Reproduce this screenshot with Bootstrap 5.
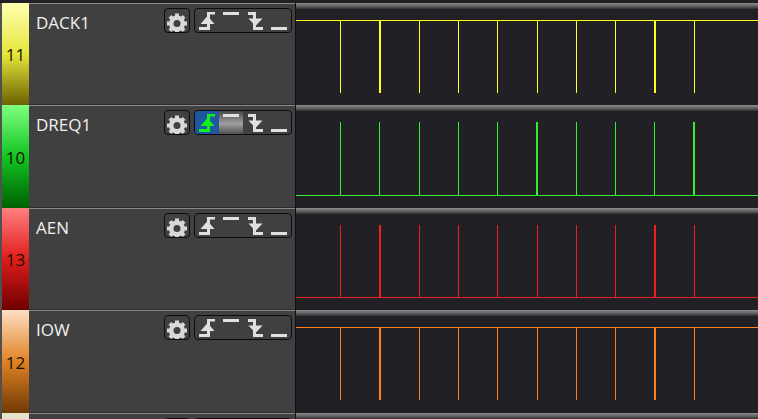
<!DOCTYPE html>
<html lang="en">
<head>
  <meta charset="UTF-8">
  <meta name="viewport" content="width=device-width, initial-scale=1">
  <title>Logic Analyzer</title>
  <link href="https://cdn.jsdelivr.net/npm/bootstrap@5.3.3/dist/css/bootstrap.min.css" rel="stylesheet">
  <style>
    html, body {
      height: 100%;
      overflow: hidden;
    }

    body {
      background: #202025;
      font-family: "Open Sans", "Liberation Sans", sans-serif;
    }

    .trace-list {
      padding-top: 3px;
      height: 419px;
      overflow: hidden;
    }

    .trace {
      height: 102px;
      flex: none;
    }

    .trace:nth-child(even) {
      height: 103px;
    }

    .strip {
      width: 2px;
      background: #505050;
    }

    .pin {
      width: 27px;
      font-size: 17px;
      color: #1a1200;
      padding-top: 2px;
    }

    .pin-yellow { background: linear-gradient(#ffffb0, #e6e63c 50%, #6b6200); }
    .pin-green  { background: linear-gradient(#80ff80, #12c422 50%, #006000); }
    .pin-red    { background: linear-gradient(#ff8080, #e01c1c 50%, #6e0000); }
    .pin-orange { background: linear-gradient(#ffdfc4, #e08224 50%, #703a06); }
    .pin-pale   { background: #e4e4c8; }

    .panel {
      width: 266px;
      background: #404040;
      border-top: 1px solid #8a8a8a;
      border-bottom: 1px solid #2c2c2c;
      padding: 4px 3px 0 7px;
      color: #f0f0f0;
      font-size: 17px;
    }

    .name {
      line-height: 22px;
      padding-top: 4px;
    }

    .divider {
      width: 1px;
      background: #101012;
    }

    .wave {
      flex: 1;
      background: linear-gradient(#8c8c8c, #5a5a5a 60%, #2e2e30) top / 100% 6px no-repeat #202025;
    }

    .wave svg {
      display: block;
      width: 462px;
      height: 102px;
    }

    .btn-tool {
      --bs-btn-padding-x: 0;
      --bs-btn-padding-y: 0;
      --bs-btn-border-radius: 0;
      --bs-btn-border-width: 0;
      width: 24px;
      height: 23px;
      flex: none;
      background: transparent;
      line-height: 0;
    }

    .tool-box {
      border: 1px solid #0c0c0c;
      border-radius: 4px;
      overflow: hidden;
      height: 25px;
    }

    .btn-tool svg {
      display: block;
      fill: #e0e0e0;
    }

    .btn-tool.is-blue {
      background: #1f57a0;
    }

    .btn-tool.is-blue svg {
      fill: #14f014;
    }

    .btn-tool.is-grey {
      background: linear-gradient(#484848, #a0a0a0 55%, #505050);
    }
  </style>
</head>
<body>

  <svg width="0" height="0" class="position-absolute">
    <symbol id="i-gear" viewBox="0 0 24 23">
      <g fill="#d8d8d8">
        <rect x="10" y="1.5" width="4" height="20" />
        <rect x="10" y="1.5" width="4" height="20" transform="rotate(45 12 11.5)" />
        <rect x="10" y="1.5" width="4" height="20" transform="rotate(90 12 11.5)" />
        <rect x="10" y="1.5" width="4" height="20" transform="rotate(135 12 11.5)" />
      </g>
      <circle cx="12" cy="11.5" r="5.75" fill="none" stroke="#d8d8d8" stroke-width="4.5" />
      <circle cx="12" cy="11.5" r="3.5" fill="#404040" />
    </symbol>
    <symbol id="i-rise" viewBox="0 0 24 23">
      <path d="M4 18h8V3h8v2.5h-5V21H4z" />
      <path d="M12.5 7L19.5 15H5.5z" />
    </symbol>
    <symbol id="i-high" viewBox="0 0 24 23">
      <path d="M4 3h16v3H4z" />
    </symbol>
    <symbol id="i-fall" viewBox="0 0 24 23">
      <path d="M5 3h8v15h7v3H10V6H5z" />
      <path d="M12.5 17L19.5 9.5H5.5z" />
    </symbol>
    <symbol id="i-low" viewBox="0 0 24 23">
      <path d="M4 18h16v3H4z" />
    </symbol>
  </svg>

  <div class="trace-list">

    <!-- DACK1 -->
    <div class="trace d-flex">
      <div class="strip"></div>
      <div class="pin pin-yellow d-flex align-items-center justify-content-center">11</div>
      <div class="panel d-flex justify-content-between align-items-start">
        <span class="name">DACK1</span>
        <div class="d-flex gap-1">
          <div class="tool-box"><button class="btn btn-tool"><svg width="24" height="23"><use href="#i-gear" /></svg></button></div>
          <div class="tool-box d-flex">
            <button class="btn btn-tool"><svg width="24" height="23"><use href="#i-rise" /></svg></button>
            <button class="btn btn-tool"><svg width="24" height="23"><use href="#i-high" /></svg></button>
            <button class="btn btn-tool"><svg width="24" height="23"><use href="#i-fall" /></svg></button>
            <button class="btn btn-tool"><svg width="24" height="23"><use href="#i-low" /></svg></button>
          </div>
        </div>
      </div>
      <div class="divider"></div>
      <div class="wave" data-color="#ffff20" data-line="17" data-end="90" data-extra="380,655"></div>
    </div>

    <!-- DREQ1 -->
    <div class="trace d-flex">
      <div class="strip"></div>
      <div class="pin pin-green d-flex align-items-center justify-content-center">10</div>
      <div class="panel d-flex justify-content-between align-items-start">
        <span class="name">DREQ1</span>
        <div class="d-flex gap-1">
          <div class="tool-box"><button class="btn btn-tool"><svg width="24" height="23"><use href="#i-gear" /></svg></button></div>
          <div class="tool-box d-flex">
            <button class="btn btn-tool is-blue"><svg width="24" height="23"><use href="#i-rise" /></svg></button>
            <button class="btn btn-tool is-grey"><svg width="24" height="23"><use href="#i-high" /></svg></button>
            <button class="btn btn-tool"><svg width="24" height="23"><use href="#i-fall" /></svg></button>
            <button class="btn btn-tool"><svg width="24" height="23"><use href="#i-low" /></svg></button>
          </div>
        </div>
      </div>
      <div class="divider"></div>
      <div class="wave" data-color="#30f030" data-line="90" data-end="90" data-extra="536,693"></div>
    </div>

    <!-- AEN -->
    <div class="trace d-flex">
      <div class="strip"></div>
      <div class="pin pin-red d-flex align-items-center justify-content-center">13</div>
      <div class="panel d-flex justify-content-between align-items-start">
        <span class="name">AEN</span>
        <div class="d-flex gap-1">
          <div class="tool-box"><button class="btn btn-tool"><svg width="24" height="23"><use href="#i-gear" /></svg></button></div>
          <div class="tool-box d-flex">
            <button class="btn btn-tool"><svg width="24" height="23"><use href="#i-rise" /></svg></button>
            <button class="btn btn-tool"><svg width="24" height="23"><use href="#i-high" /></svg></button>
            <button class="btn btn-tool"><svg width="24" height="23"><use href="#i-fall" /></svg></button>
            <button class="btn btn-tool"><svg width="24" height="23"><use href="#i-low" /></svg></button>
          </div>
        </div>
      </div>
      <div class="divider"></div>
      <div class="wave" data-color="#f02020" data-line="89" data-end="89" data-extra="380,655"></div>
    </div>

    <!-- IOW -->
    <div class="trace d-flex">
      <div class="strip"></div>
      <div class="pin pin-orange d-flex align-items-center justify-content-center">12</div>
      <div class="panel d-flex justify-content-between align-items-start">
        <span class="name">IOW</span>
        <div class="d-flex gap-1">
          <div class="tool-box"><button class="btn btn-tool"><svg width="24" height="23"><use href="#i-gear" /></svg></button></div>
          <div class="tool-box d-flex">
            <button class="btn btn-tool"><svg width="24" height="23"><use href="#i-rise" /></svg></button>
            <button class="btn btn-tool"><svg width="24" height="23"><use href="#i-high" /></svg></button>
            <button class="btn btn-tool"><svg width="24" height="23"><use href="#i-fall" /></svg></button>
            <button class="btn btn-tool"><svg width="24" height="23"><use href="#i-low" /></svg></button>
          </div>
        </div>
      </div>
      <div class="divider"></div>
      <div class="wave" data-color="#ff8020" data-line="17" data-end="90" data-extra="380,655"></div>
    </div>

    <!-- next trace, cut off by the window -->
    <div class="trace d-flex">
      <div class="strip"></div>
      <div class="pin pin-pale"></div>
      <div class="panel d-flex justify-content-end align-items-start">
        <div class="d-flex gap-1">
          <div class="tool-box"><button class="btn btn-tool"></button></div>
          <div class="tool-box d-flex">
            <button class="btn btn-tool"></button>
            <button class="btn btn-tool"></button>
            <button class="btn btn-tool"></button>
            <button class="btn btn-tool"></button>
          </div>
        </div>
      </div>
      <div class="divider"></div>
      <div class="wave"></div>
    </div>

  </div>

  <script>
    // pulse positions are window x, the svg starts at 296
    const pulses = [340, 379, 419, 458, 497, 537, 576, 615, 654, 694];
    const originX = 296;

    document.querySelectorAll('.wave[data-color]').forEach(function (wave) {
      const color = wave.dataset.color;
      // extra pixel columns that make a pulse look 2px wide
      const extra = wave.dataset.extra.split(',').map(Number);
      const lineY = Number(wave.dataset.line);
      const endY = Number(wave.dataset.end);
      let svg = '<svg viewBox="0 0 462 102">';
      svg += '<rect x="0" y="' + lineY + '" width="462" height="1" fill="' + color + '"/>';
      pulses.concat(extra).forEach(function (x) {
        svg += '<rect x="' + (x - originX) + '" y="17" width="1" height="' + (endY - 17) + '" fill="' + color + '"/>';
      });
      wave.innerHTML = svg + '</svg>';
    });
  </script>

</body>
</html>
